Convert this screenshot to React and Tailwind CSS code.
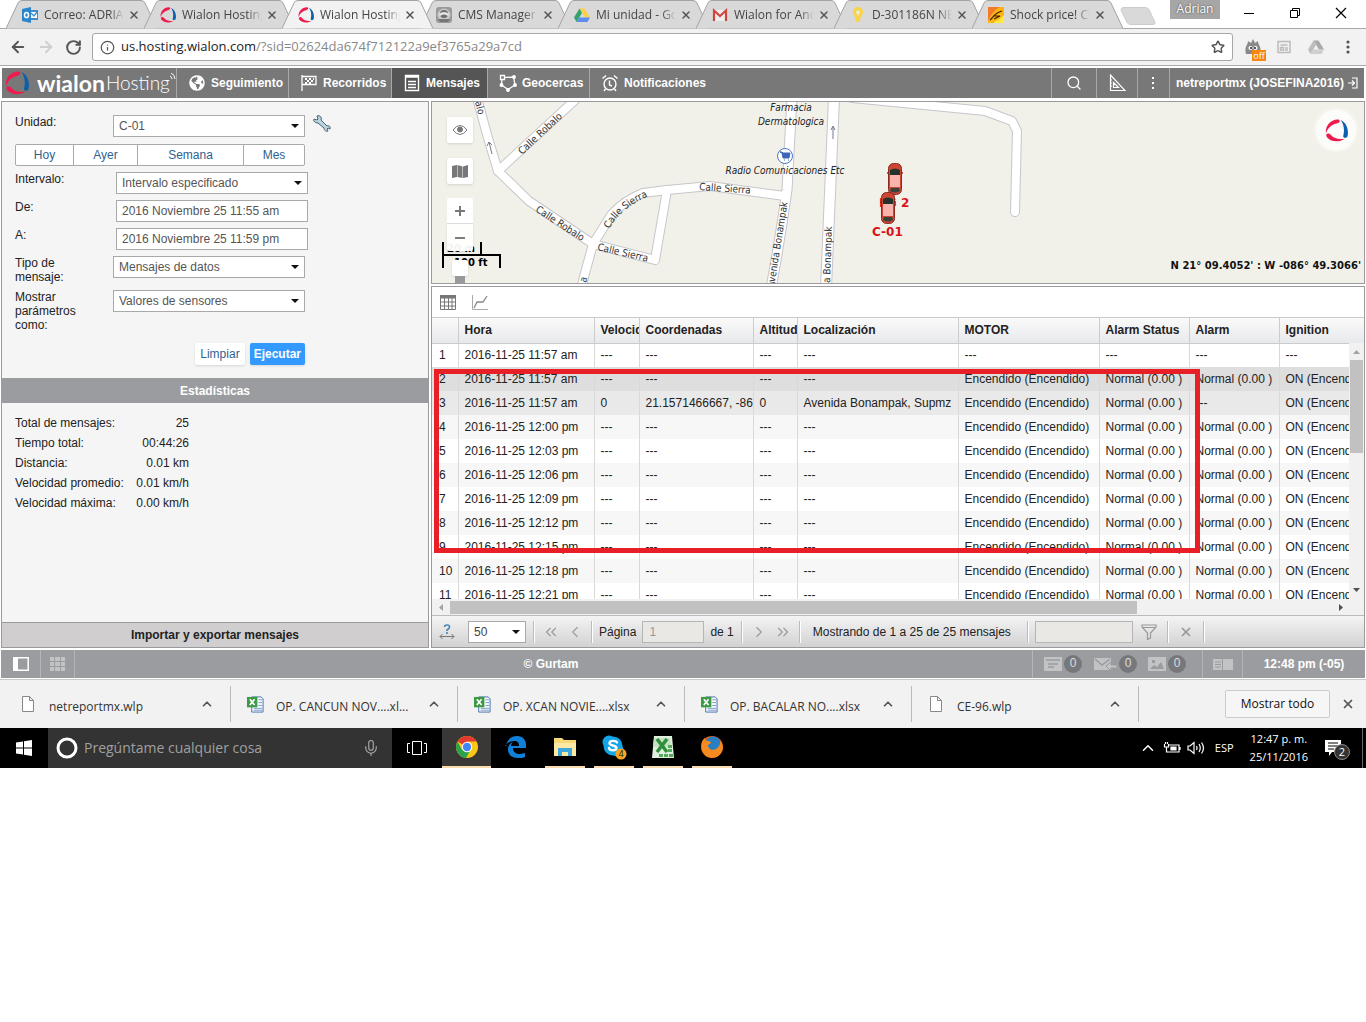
import {
  ArrowLeft,
  ArrowRight,
  ChevronLeft,
  ChevronRight,
  ChevronUp,
  ChevronsLeft,
  ChevronsRight,
  Info,
  Mic,
  RotateCw,
  Search,
  Star,
  X,
} from "lucide-react";
import { FaGlobeAmericas } from "react-icons/fa";

const UI = "font-['Liberation_Sans',Arial,sans-serif]";
const CHROME = "font-['Open_Sans','Noto_Sans',sans-serif]";

function WialonMark({ className }) {
  return (
    <svg viewBox="0 0 24 24" className={className} aria-hidden="true">
      <path d="M14 .5C6 0 0 7 1 15 3 9 7 6 13 4.500 16 3.500 16 1 14 .5z" fill="#ee1c4e" />
      <path d="M1.500 16c1-1.500 3.500-1 5 1 3 3.500 8 4.500 14 3.500-6 4-14 3.500-18-1-1-1-1.500-2.500-1-3.500z" fill="#ee1c4e" />
      <path d="M16.500 1c6 3 8.500 10 7 17-1 2.500-4.500 2-4.500 0 1.500-6 1-12-2.500-17z" fill="#0c5fa8" />
    </svg>
  );
}

function OutlookIcon() {
  return (
    <svg viewBox="0 0 16 16" className="size-4">
      <rect x="8" y="3" width="8" height="10" fill="#3b8fd0" />
      <path d="M9 5h6v6H9z" fill="#fff" />
      <path d="m9 6 3 3 3-4" fill="none" stroke="#3b8fd0" strokeWidth="1.3" />
      <path d="M0 2 9 0v16l-9-2z" fill="#2a86cc" />
      <ellipse cx="4.5" cy="8" rx="2" ry="2.6" fill="none" stroke="#fff" strokeWidth="1.5" />
    </svg>
  );
}

function CmsIcon() {
  return (
    <svg viewBox="0 0 16 16" className="size-4">
      <rect width="16" height="16" rx="3" fill="#9a9a9a" />
      <circle cx="8" cy="8" r="6.5" fill="#c9c9c9" />
      <circle cx="8" cy="7" r="4" fill="#6d6d6d" />
      <path d="M3 7q5-4 10 0l-1 2q-4-3-8 0z" fill="#e4e4e4" />
      <path d="M2 12h12l-2 3H4z" fill="#777" />
    </svg>
  );
}

function DriveIcon({ gray }) {
  return (
    <svg viewBox="0 0 16 16" className="size-4">
      <path d="M5.5 1.5h5L16 10.500h-5z" fill={gray ? "#a9a9a9" : "#fbd04b"} />
      <path d="M5.5 1.5 8 6 2.500 15 0 10.500z" fill={gray ? "#bdbdbd" : "#35a36c"} />
      <path d="M5.2 10.500H16L13.500 15h-11z" fill={gray ? "#cfcfcf" : "#5d8df0"} />
    </svg>
  );
}

function GmailIcon() {
  return (
    <svg viewBox="0 0 16 16" className="size-4">
      <path d="M1 3h14v11H1z" fill="#eee" />
      <path d="M2 14V3.500L8 9l6-5.500V14" fill="none" stroke="#d0473c" strokeWidth="2.2" />
    </svg>
  );
}

function BulbIcon() {
  return (
    <svg viewBox="0 0 16 16" className="size-4">
      <path d="M8 0a5 5 0 0 1 5 5c0 4-3 4-3 10H6c0-6-3-6-3-10a5 5 0 0 1 5-5z" fill="#f6d44b" />
      <path d="M6 5c0-2 4-2 4 0 0 2-2 2-2 6 0-4-2-4-2-6z" fill="#efe9cf" />
    </svg>
  );
}

function ShockIcon() {
  return (
    <svg viewBox="0 0 16 16" className="size-4">
      <rect width="16" height="16" fill="#fdb515" />
      <path d="M0 0h12C6 3 3 8 0 14z" fill="#f37a2b" />
      <path d="M7 14c3 0 6-3 9-6v8H6z" fill="#ffe93d" />
      <path d="M2 13c3-2 4-7 12-9M5 9h7l-6 3" fill="none" stroke="#3d2200" strokeWidth="1.2" />
    </svg>
  );
}

const tabs = [
  { title: "Correo: ADRIAN", icon: <OutlookIcon /> },
  { title: "Wialon Hosting", icon: <WialonMark className="size-4" /> },
  { title: "Wialon Hosting", icon: <WialonMark className="size-4" />, active: true },
  { title: "CMS Manager", icon: <CmsIcon /> },
  { title: "Mi unidad - Goo", icon: <DriveIcon /> },
  { title: "Wialon for Andro", icon: <GmailIcon /> },
  { title: "D-301186N NEX", icon: <BulbIcon /> },
  { title: "Shock price! Ch", icon: <ShockIcon /> },
];

function TabStrip() {
  return (
    <div className="flex h-7 bg-white pl-[6px]">
      {tabs.map((tab, i) => (
        <div
          key={i}
          className={`relative mr-[-13px] flex h-[29px] w-[151px] shrink-0 items-center pl-4 ${tab.active ? "z-10" : ""}`}
        >
          <svg viewBox="0 0 151 29" className="absolute inset-0 size-full" aria-hidden="true">
            <path
              d="M0 28.500 12 3q1-2.500 4-2.500h119q3 0 4 2.500l12 25.500"
              fill={tab.active ? "#f2f2f2" : "#d9d9d9"}
              stroke="#a3a3a3"
            />
          </svg>
          <span className="relative">{tab.icon}</span>
          <span className="relative ml-[6px] w-20 overflow-hidden text-xs whitespace-nowrap text-[#444] [mask-image:linear-gradient(to_right,#000_82%,transparent)]">
            {tab.title}
          </span>
          <button type="button" aria-label="Cerrar pestaña" className="relative ml-1 text-[#555]">
            <X size={12} strokeWidth={3} />
          </button>
        </div>
      ))}
      <svg viewBox="0 0 36 18" className="mt-[7px] ml-[10px] h-[18px] w-9 shrink-0">
        <path d="M3 .5h22q3 0 4 2l6 13q0 2-2 2H11q-3 0-4-2L1 3q0-2 2-2.500z" fill="#d9d9d9" stroke="#ccc" />
      </svg>
      <span className="ml-[14px] h-[19px] w-[50px] shrink-0 bg-[#a6a6a6] text-center text-xs leading-[18px] text-white [text-shadow:0_0_2px_#333]">
        Adrian
      </span>
      <div className="ml-auto flex items-start pt-[6px] pr-[18px]">
        <button type="button" aria-label="Minimizar" className="mr-8">
          <svg viewBox="0 0 14 14" className="size-[14px]"><path d="M2 7.500h10" stroke="#000" /></svg>
        </button>
        <button type="button" aria-label="Restaurar" className="mr-8">
          <svg viewBox="0 0 14 14" className="size-[14px]" fill="none" stroke="#000">
            <path d="M2.500 4.500h7v7h-7zM4.500 4V2.500h7v7H10" />
          </svg>
        </button>
        <button type="button" aria-label="Cerrar">
          <svg viewBox="0 0 14 14" className="size-[14px]"><path d="m2 2 10 10M12 2 2 12" stroke="#000" strokeWidth="1.200" /></svg>
        </button>
      </div>
    </div>
  );
}

function AddressBar() {
  return (
    <div className="flex h-[38px] items-center border-y border-[#a9a9a9] bg-[#f2f2f2] pl-[9px] text-[#555]">
      <button type="button" aria-label="Atrás"><ArrowLeft size={18} strokeWidth={2.5} /></button>
      <button type="button" aria-label="Adelante" className="ml-[10px] text-[#cfcfcf]"><ArrowRight size={18} strokeWidth={2.5} /></button>
      <button type="button" aria-label="Recargar" className="ml-[10px]"><RotateCw size={17} strokeWidth={2.8} /></button>
      <div className="ml-[10px] flex h-7 flex-1 items-center rounded-[3px] border border-[#a6a6a6] bg-white px-[7px]">
        <Info size={15} />
        <div className="ml-[6px] flex-1 text-[13px] text-[#888]">
          <span className="text-[#222]">us.hosting.wialon.com</span>/?sid=02624da674f712122a9ef3765a29a7cd
        </div>
        <Star size={14} strokeWidth={2.5} />
      </div>
      <div className="ml-3 flex items-center">
        <span className="relative size-4">
          <svg viewBox="0 0 16 16" className="size-4">
            <path d="M1 15C-1 8 3 6 3 2l3 2 2-4 2 4 3-2c0 4 4 6 2 13z" fill="#8a8a8a" />
            <circle cx="5.5" cy="9" r="2" fill="#fff" /><circle cx="10.5" cy="9" r="2" fill="#fff" />
            <circle cx="6" cy="9" r="1" fill="#222" /><circle cx="10" cy="9" r="1" fill="#222" />
          </svg>
          <span className="absolute top-[11px] left-[7px] h-[11px] w-[14px] bg-[#f7870f] text-center text-[9px] leading-[11px] text-white">off</span>
        </span>
        <svg viewBox="0 0 14 14" className="ml-4 size-[14px]" fill="none" stroke="#bcbcbc" strokeWidth="1.5">
          <path d="M1 1.500h12v11H1zM3.500 5h7M3.500 7.500h3v2.500h-3zM8 8h3M8 10h3" />
        </svg>
        <span className="ml-[17px]"><DriveIcon gray /></span>
        <svg viewBox="0 0 4 14" className="mr-4 ml-[22px] h-[14px] w-1" fill="#555">
          <circle cx="2" cy="2" r="1.6" /><circle cx="2" cy="7" r="1.6" /><circle cx="2" cy="12" r="1.6" />
        </svg>
      </div>
    </div>
  );
}

function FlagIcon() {
  return (
    <svg viewBox="0 0 18 18" className="size-[18px]" fill="none" stroke="#fff" strokeWidth="1.3">
      <path d="M2 1v16M2 2.500h14v8H2" />
      <path d="M5 5h2M9 5h2M13 5h1M7 7h2M11 7h2M5 9h2M9 9h2" strokeWidth="2" />
    </svg>
  );
}

function MessagesIcon() {
  return (
    <svg viewBox="0 0 16 18" className="h-[18px] w-4" fill="none" stroke="#fff" strokeWidth="1.4">
      <path d="M1.500 1.500h13v15h-13zM1 3h14M4 7.500h8M4 10.500h8M4 13.500h8" />
    </svg>
  );
}

function GeofenceIcon() {
  return (
    <svg viewBox="0 0 18 18" className="size-[18px]" fill="none" stroke="#fff" strokeWidth="1.3">
      <path d="M5 3.500 14.500 3 16 11l-7 4.500L2.500 11 3 5" />
      <path d="M1.500 1.500h4v4h-4z" />
      <g fill="#fff"><circle cx="15" cy="3" r="1.3" /><circle cx="16" cy="11" r="1.3" /><circle cx="9" cy="16" r="1.3" /><circle cx="2.5" cy="11" r="1.3" /></g>
    </svg>
  );
}

function AlarmIcon() {
  return (
    <svg viewBox="0 0 18 18" className="size-[18px]" fill="none" stroke="#fff" strokeWidth="1.4">
      <circle cx="9" cy="10" r="6" />
      <path d="M8.500 6.500V11l2.500 1M1.500 4.500 5 1.500M16.500 4.500 13 1.500M4.500 15 3 17M13.500 15l1.500 2" />
    </svg>
  );
}

const navItems = [
  { label: "Seguimiento", icon: <FaGlobeAmericas size={16} />, width: "w-[112px]" },
  { label: "Recorridos", icon: <FlagIcon />, width: "w-[103px]" },
  { label: "Mensajes", icon: <MessagesIcon />, width: "w-[96px]", active: true },
  { label: "Geocercas", icon: <GeofenceIcon />, width: "w-[102px]" },
  { label: "Notificaciones", icon: <AlarmIcon />, width: "w-[124px]" },
];

function AppHeader() {
  return (
    <header className="mx-[2px] mt-[2px] flex h-[30px] items-stretch bg-[#787878] text-xs font-bold text-white">
      <div className="flex w-[174px] items-center pl-[3px]">
        <WialonMark className="size-6 shrink-0" />
        <span className="ml-2 font-['Lato',sans-serif] text-[23px] leading-7 font-bold">wialon</span>
        <span className="ml-px font-['Lato',sans-serif] text-[19px] leading-7 font-light">Hosting</span>
        <svg viewBox="0 0 6 8" className="mb-3 h-2 w-[6px] shrink-0" fill="none" stroke="#fff">
          <path d="M0 3q2 1 2 3M1 0q4 2 4 6" />
        </svg>
      </div>
      <nav className="flex">
        {navItems.map((item) => (
          <a
            key={item.label}
            href="#"
            className={`flex shrink-0 items-center gap-[5px] border-l border-[#a8a8a8] pl-[10px] ${item.width} ${item.active ? "bg-[#555]" : ""}`}
          >
            <span className="flex w-[19px] justify-center">{item.icon}</span>
            {item.label}
          </a>
        ))}
      </nav>
      <div className="ml-auto flex">
        <button type="button" aria-label="Buscar" className="flex w-[45px] items-center justify-center border-l border-[#a8a8a8]">
          <Search size={16} />
        </button>
        <button type="button" aria-label="Herramientas" className="flex w-[41px] items-center justify-center border-l border-[#a8a8a8]">
          <svg viewBox="0 0 18 18" className="size-[18px]" fill="none" stroke="#fff" strokeWidth="1.2">
            <path d="M2.500 1v15.500H17zM5.500 8.500v5h5zM2 6h2M2 9h2M2 12h2" />
          </svg>
        </button>
        <button type="button" aria-label="Más" className="flex w-8 items-center justify-center border-l border-[#a8a8a8]">
          <svg viewBox="0 0 4 12" className="h-3 w-1" fill="#fff"><path d="M1 0h2v2H1zM1 5h2v2H1zM1 10h2v2H1z" /></svg>
        </button>
        <button type="button" className="flex items-center gap-1 border-l border-[#a8a8a8] px-[6px]">
          netreportmx (JOSEFINA2016)
          <svg viewBox="0 0 10 12" className="h-3 w-[10px]" fill="none" stroke="#fff" strokeWidth="1.2">
            <path d="M4 1h5v10H4M0 6h6M4 3.500 6.500 6 4 8.500" />
          </svg>
        </button>
      </div>
    </header>
  );
}

function Caret({ className }) {
  return (
    <svg viewBox="0 0 8 4" className={`pointer-events-none absolute h-1 w-2 ${className}`} aria-hidden="true">
      <path d="M0 0h8L4 4z" fill="#111" />
    </svg>
  );
}

const control = "h-[22px] w-[192px] appearance-none border border-[#a9a9a9] bg-white px-[5px] text-[#555]";

function SelectRow({ id, label, value, offset, children }) {
  return (
    <div className="flex items-start">
      <label htmlFor={id} className={`pr-4 ${offset ? "w-[101px]" : "w-[98px]"}`}>{label}</label>
      <div className="relative">
        <select id={id} className={`block ${control}`}>
          <option>{value}</option>
        </select>
        <Caret className="top-[9px] right-[6px]" />
      </div>
      {children}
    </div>
  );
}

function DateRow({ id, label, value }) {
  return (
    <div className="flex items-start">
      <label htmlFor={id} className="w-[101px]">{label}</label>
      <input id={id} type="text" defaultValue={value} className={control} />
    </div>
  );
}

const ranges = [
  ["Hoy", "w-[58px]"],
  ["Ayer", "w-[64px]"],
  ["Semana", "w-[106px]"],
  ["Mes", "flex-1"],
];

const stats = [
  ["Total de mensajes:", "25"],
  ["Tiempo total:", "00:44:26"],
  ["Distancia:", "0.01 km"],
  ["Velocidad promedio:", "0.01 km/h"],
  ["Velocidad máxima:", "0.00 km/h"],
];

function Sidebar() {
  return (
    <aside className="flex w-[428px] shrink-0 flex-col border border-[#9a9a9e] bg-[#f5f5f5] text-xs text-[#222]">
      <form className="flex flex-col gap-[6px] px-[13px] pt-[13px] leading-[14px]" onSubmit={(e) => e.preventDefault()}>
        <SelectRow id="unit" label="Unidad:" value="C-01">
          <button type="button" aria-label="Propiedades" className="ml-2">
            <svg viewBox="0 0 18 18" className="size-[18px]">
              <path
                d="M1 4l3 1 1-1-1-3c3-1 5 1 4 4l6 6c2-1 4 1 3 3l-2-1-1 1 1 2c-2 1-4-1-4-3L5 8C2 8 0 6 1 4z"
                fill="#b9d5e2"
                stroke="#4d5f6b"
              />
            </svg>
          </button>
        </SelectRow>
        <div className="mt-px flex h-[22px] w-[290px] divide-x divide-[#a9a9a9] rounded-xs border border-[#a9a9a9] bg-white text-[#2f5f8f]">
          {ranges.map(([label, width]) => (
            <button key={label} type="button" className={width}>{label}</button>
          ))}
        </div>
        <SelectRow id="interval" label="Intervalo:" value="Intervalo especificado" offset />
        <DateRow id="from" label="De:" value="2016 Noviembre 25 11:55 am" />
        <DateRow id="to" label="A:" value="2016 Noviembre 25 11:59 pm" />
        <SelectRow id="type" label="Tipo de mensaje:" value="Mensajes de datos" />
        <SelectRow id="params" label="Mostrar parámetros como:" value="Valores de sensores" />
        <div className="flex w-[290px] justify-end gap-[5px] pt-[5px]">
          <button type="button" className="h-[22px] rounded-xs bg-white px-[5px] text-[#2f5f8f] shadow-sm">Limpiar</button>
          <button type="submit" className="h-[22px] rounded-xs bg-[#3399ff] px-1 font-bold text-white shadow-sm">Ejecutar</button>
        </div>
      </form>
      <h2 className="mt-[13px] h-[25px] bg-[#9b9ca0] text-center leading-[26px] font-bold text-white">Estadísticas</h2>
      <dl className="mt-[10px] ml-[13px] w-[174px] leading-5">
        {stats.map(([label, value]) => (
          <div key={label} className="flex justify-between whitespace-nowrap">
            <dt>{label}</dt>
            <dd>{value}</dd>
          </div>
        ))}
      </dl>
      <button type="button" className="mt-auto h-[25px] border-t border-[#9a9a9e] bg-[#d0cece] font-bold">
        Importar y exportar mensajes
      </button>
    </aside>
  );
}

const roads = [
  { d: "M477 98 488 138 498 171 529 201 593 244", w: 8 },
  { d: "M498 171 575 100", w: 8 },
  { d: "M581 288 593 244 612 214Q625 200 643 193L667 190 710 186 785 196", w: 8 },
  { d: "M667 190 655 260 593 244", w: 8 },
  { d: "M792 98 787 190Q780 240 771 288", w: 9 },
  { d: "M834 98 826 288", w: 10 },
  { d: "M852 98 985 111 1012 121 1017 131 1015 212", w: 8 },
];

function Car({ x, y }) {
  return (
    <g transform={`translate(${x} ${y})`}>
      <rect x="0" y="9" width="16" height="2" rx="1" fill="#8c2a20" />
      <rect x="1.500" y=".5" width="13" height="31" rx="5" fill="#cf4434" stroke="#8a2a20" />
      <path d="M3 7q5-3 10 0v5H3z" fill="#26332c" />
      <path d="M3 12h10v12H3z" fill="#fbb4ac" />
      <path d="M4 25h8l1 3q-5 3-10 0z" fill="#36443b" />
    </g>
  );
}

function MapDrawing() {
  return (
    <svg
      viewBox="432 102 932 181"
      className="absolute top-0 left-0 h-[181px] w-[932px] font-['DejaVu_Sans_Condensed','DejaVu_Sans',sans-serif]"
      fill="none"
    >
      <g stroke="#c6c6cc" strokeLinecap="round" strokeLinejoin="round">
        {roads.map((r) => <path key={r.d} d={r.d} strokeWidth={r.w + 2} />)}
      </g>
      <g stroke="#fff" strokeLinecap="round" strokeLinejoin="round">
        {roads.map((r) => <path key={r.d} d={r.d} strokeWidth={r.w} />)}
      </g>
      <g stroke="#77778c" strokeWidth="1">
        <path d="M492 154 489 142M487 146l2-4 3 3M833 139V127M831 130l2-4 2 4" />
      </g>
      <defs>
        <path id="sierraCurve" d="M609 229Q622 206 652 195" />
      </defs>
      <g fill="#333" fontSize="10">
        <text transform="translate(522 155) rotate(-43)">Calle Robalo</text>
        <text transform="translate(535 211) rotate(33)">Calle Robalo</text>
        <text><textPath href="#sierraCurve">Calle Sierra</textPath></text>
        <text transform="translate(699 190) rotate(4)">Calle Sierra</text>
        <text transform="translate(597 250) rotate(13)">Calle Sierra</text>
        <text transform="translate(475 102) rotate(76)">alo</text>
        <text transform="translate(586 283) rotate(-76)">a</text>
        <text transform="translate(774 288) rotate(-81)">Avenida Bonampak</text>
        <text transform="translate(830 283) rotate(-88)">a Bonampak</text>
      </g>
      <g fill="#222" fontSize="10" fontStyle="italic" textAnchor="middle">
        <text x="791" y="111">Farmacia</text>
        <text x="791" y="125">Dermatologica</text>
        <text x="785" y="174">Radio Comunicaciones Etc</text>
      </g>
      <circle cx="785" cy="156" r="7.5" fill="#fff" stroke="#4a76c8" />
      <path d="M780 152h2l1 1h7l-1 5h-6l-1-5zM784 160h1M788 160h1" fill="#3b67b8" stroke="#3b67b8" />
      <Car x={887} y={163} />
      <g fill="#d9121a" fontSize="12" fontWeight="bold" className="font-['DejaVu_Sans',Verdana,sans-serif]">
        <text x="879" y="207">BS 2</text>
        <text x="872" y="236">C-01</text>
      </g>
      <Car x={880} y={192} />
    </svg>
  );
}

const mapButton = "flex w-[26px] items-center justify-center bg-white text-[#777]";

function MapPanel() {
  return (
    <section className="relative h-[183px] overflow-hidden border border-[#9a9a9e] bg-[#f2f1e9]">
      <MapDrawing />
      <div className="absolute top-[147px] left-[10px] font-['DejaVu_Sans',sans-serif] text-[10px] leading-3 font-bold">
        <svg viewBox="0 0 60 28" className="absolute top-[-7px] left-0 h-7 w-[60px]" fill="none" stroke="#000" strokeWidth="2">
          <path d="M1 0v26M0 13h58v13M39 0v13" />
        </svg>
        <span className="absolute -top-[6px] left-[5px] whitespace-nowrap">20 m</span>
        <span className="absolute top-[8px] left-[12px] whitespace-nowrap">100 ft</span>
      </div>
      <div className="absolute top-[15px] left-[15px] flex flex-col">
        <button type="button" aria-label="Visibilidad" className={`${mapButton} h-[26px] rounded-xs shadow-sm`}>
          <svg viewBox="0 0 16 12" className="h-3 w-4" fill="none" stroke="#777">
            <path d="M1 6q7-9 14 0-7 9-14 0z" /><circle cx="8" cy="5.5" r="2.5" fill="#777" />
          </svg>
        </button>
        <button type="button" aria-label="Capas" className={`${mapButton} mt-[15px] h-[26px] rounded-xs shadow-sm`}>
          <svg viewBox="0 0 16 13" className="h-[13px] w-4" fill="#777">
            <path d="M0 1l5-1v12l-5 1zM5.500 0l5 1.500V13l-5-1zM11 1.500 16 0v12l-5 1z" />
          </svg>
        </button>
        <button type="button" aria-label="Acercar" className={`${mapButton} mt-[14px] h-[26px] rounded-t-xs border-b border-[#ddd]`}>
          <svg viewBox="0 0 10 10" className="size-[10px]"><path d="M5 0v10M0 5h10" stroke="#777" strokeWidth="2" /></svg>
        </button>
        <button type="button" aria-label="Alejar" className={`${mapButton} h-[27px] rounded-b-xs opacity-95 shadow-sm`}>
          <svg viewBox="0 0 10 10" className="size-[10px]"><path d="M0 5h10" stroke="#777" strokeWidth="2" /></svg>
        </button>
        <span className="mx-auto mt-[9px] h-4 w-4 rounded-xs bg-white shadow-sm" />
        <span className="mx-auto h-3 w-[10px] bg-[#999]" />
      </div>
      <span className="absolute top-[8px] right-[8px] flex size-10 items-center justify-center rounded-full bg-white/80 shadow-[0_0_4px_#fff]">
        <WialonMark className="size-[23px]" />
      </span>
      <span className="absolute right-[3px] bottom-[9px] font-['DejaVu_Sans',Verdana,sans-serif] text-[10px] leading-4 font-bold text-[#111]">
        N 21° 09.4052' : W -086° 49.3066'
      </span>
    </section>
  );
}

const columns = [
  ["", "w-[26px]"],
  ["Hora", "w-[136px]"],
  ["Velocidad", "w-[45px]"],
  ["Coordenadas", "w-[114px]"],
  ["Altitud", "w-[44px]"],
  ["Localización", "w-[161px]"],
  ["MOTOR", "w-[141px]"],
  ["Alarm Status", "w-[90px]"],
  ["Alarm", "w-[90px]"],
  ["Ignition", ""],
];

const on = ["Encendido (Encendido)", "Normal (0.00 )", "Normal (0.00 )", "ON (Encendido)"];
const blank = ["---", "---", "---", "---"];

const messages = [
  ["2016-11-25 11:57 am", ...blank, ...blank],
  ["2016-11-25 11:57 am", ...blank, ...on],
  [
    "2016-11-25 11:57 am", "0", "21.1571466667, -86.8", "0", "Avenida Bonampak, Supmz",
    "Encendido (Encendido)", "Normal (0.00 )", "---", "ON (Encendido)",
  ],
  ["2016-11-25 12:00 pm", ...blank, ...on],
  ["2016-11-25 12:03 pm", ...blank, ...on],
  ["2016-11-25 12:06 pm", ...blank, ...on],
  ["2016-11-25 12:09 pm", ...blank, ...on],
  ["2016-11-25 12:12 pm", ...blank, ...on],
  ["2016-11-25 12:15 pm", ...blank, ...on],
  ["2016-11-25 12:18 pm", ...blank, ...on],
  ["2016-11-25 12:21 pm", ...blank, ...on],
];

function rowColor(i) {
  if (i === 1) return "bg-[#dedede]";
  if (i === 2) return "bg-[#e9e9e9]";
  return i % 2 ? "bg-[#f7f7f7]" : "bg-white";
}

function MessagesTable() {
  return (
    <div className="relative h-[281px] overflow-hidden">
      <table className="w-full table-fixed border-collapse text-xs whitespace-nowrap text-[#222]">
        <thead>
          <tr className="h-[25px] bg-linear-to-b from-[#fafafa] to-[#e8e9eb]">
            {columns.map(([label, width]) => (
              <th
                key={label}
                className={`overflow-hidden border-r border-b border-[#ccc] p-0 pl-[6px] text-left last:border-r-0 ${width}`}
              >
                {label}
              </th>
            ))}
          </tr>
        </thead>
        <tbody>
          {messages.map((cells, i) => (
            <tr key={i} className={`h-6 ${rowColor(i)}`}>
              <td className="overflow-hidden border-r border-[#d9d9d9] p-0 pl-[7px]">{i + 1}</td>
              {cells.map((cell, j) => (
                <td key={j} className="overflow-hidden border-r border-[#d9d9d9] p-0 pl-[6px] last:border-r-0">{cell}</td>
              ))}
            </tr>
          ))}
        </tbody>
      </table>
      <div className="absolute top-[25px] right-0 bottom-0 flex w-[15px] flex-col items-center bg-[#f1f1f1]">
        <svg viewBox="0 0 7 4" className="mt-[7px] h-1 w-[7px]"><path d="M0 4h7L3.500 0z" fill="#a3a3a3" /></svg>
        <span className="mt-[6px] h-[93px] w-[13px] bg-[#c1c1c1]" />
        <svg viewBox="0 0 7 4" className="mt-auto mb-[7px] h-1 w-[7px]"><path d="M0 0h7L3.500 4z" fill="#505050" /></svg>
      </div>
    </div>
  );
}

function PagerRule() {
  return <span className="h-[22px] w-[2px] shrink-0 border-l border-[#bbb] bg-white" />;
}

function Pager() {
  return (
    <div className="flex h-8 items-center border-t border-[#bbb] bg-linear-to-b from-[#f4f4f4] to-[#d2d2d2] text-xs whitespace-nowrap text-[#222]">
      <svg viewBox="0 0 16 15" className="ml-[7px] h-[15px] w-4 shrink-0" fill="none">
        <path d="M5.500 3q0-2 2.500-2t2.500 2q0 1.500-2.500 3v1M8 8v2" stroke="#4a86b8" strokeWidth="1.6" />
        <path d="M1 12.500h14M3.500 10 1 12.500 3.500 15M12.500 10l2.500 2.500-2.500 2.500" stroke="#777" />
      </svg>
      <div className="relative mr-[7px] ml-[13px]">
        <select aria-label="Filas por página" className="block h-[22px] w-[58px] appearance-none border border-[#a9a9a9] bg-white px-[5px] text-[#444]">
          <option>50</option>
        </select>
        <Caret className="top-[9px] right-[6px]" />
      </div>
      <PagerRule />
      <button type="button" aria-label="Primera página" className="ml-[7px] text-[#999]"><ChevronsLeft size={18} strokeWidth={1.5} /></button>
      <button type="button" aria-label="Página anterior" className="mr-[7px] ml-[6px] text-[#999]"><ChevronLeft size={18} strokeWidth={1.5} /></button>
      <PagerRule />
      <label htmlFor="page" className="ml-[6px]">Página</label>
      <input id="page" type="text" defaultValue="1" disabled className="mr-[6px] ml-[6px] h-[22px] w-[62px] border border-[#b5b5b5] bg-[#e9e8e4] px-[6px] text-[#999]" />
      de 1
      <span className="w-[7px]" />
      <PagerRule />
      <button type="button" aria-label="Página siguiente" className="ml-[7px] text-[#999]"><ChevronRight size={18} strokeWidth={1.5} /></button>
      <button type="button" aria-label="Última página" className="mr-[7px] ml-[6px] text-[#999]"><ChevronsRight size={18} strokeWidth={1.5} /></button>
      <PagerRule />
      <span className="mr-4 ml-3">Mostrando de 1 a 25 de 25 mensajes</span>
      <PagerRule />
      <input type="text" aria-label="Filtro" disabled className="ml-[6px] h-[22px] w-[98px] border border-[#b5b5b5] bg-[#e9e8e4]" />
      <button type="button" aria-label="Filtrar" className="mr-[10px] ml-2">
        <svg viewBox="0 0 16 16" className="size-4" fill="none" stroke="#999" strokeWidth="1.2"><path d="M1 1h14v2L9.500 9v5l-3 1.500V9L1 3zM2 3.500h12" /></svg>
      </button>
      <PagerRule />
      <button type="button" aria-label="Borrar filtro" className="mx-[10px] text-[#999]"><X size={14} strokeWidth={3} /></button>
      <PagerRule />
    </div>
  );
}

function MessagesPanel() {
  return (
    <section className="relative mt-[2px] border border-[#9a9a9e] bg-white">
      <div className="flex h-[31px] items-center gap-4 border-b border-[#ccc] pt-px pl-2">
        <button type="button" aria-label="Tabla">
          <svg viewBox="0 0 16 15" className="h-[15px] w-4" fill="none" stroke="#777">
            <path d="M.5.5h15v14H.5zM0 3h16M0 7h16M0 11h16M4.500 3v12M8.500 3v12M12 3v12" /><path d="M0 1.500h16" strokeWidth="3" />
          </svg>
        </button>
        <button type="button" aria-label="Gráfico">
          <svg viewBox="0 0 16 15" className="h-[15px] w-4" fill="none">
            <path d="M.5 0v14.500H16" stroke="#aaa" /><path d="m2 13 3-6h6l4-6" stroke="#888" strokeWidth="1.3" />
          </svg>
        </button>
      </div>
      <MessagesTable />
      <div className="flex h-4 items-center bg-[#f1f1f1] pr-[21px] pl-[7px]">
        <svg viewBox="0 0 4 7" className="h-[7px] w-1"><path d="M4 0v7L0 3.500z" fill="#a3a3a3" /></svg>
        <span className="ml-[7px] h-[13px] w-[76%] bg-[#c1c1c1]" />
        <svg viewBox="0 0 4 7" className="ml-auto h-[7px] w-1"><path d="M0 0v7l4-3.500z" fill="#505050" /></svg>
      </div>
      <Pager />
      <div className="pointer-events-none absolute top-[82px] left-[2px] h-[184px] w-[766px] border-[5px] border-[#e81f27]" />
    </section>
  );
}

function Badge() {
  return <span className="size-[18px] rounded-full bg-[#77787b] text-center leading-[17px] font-normal text-[#ddd]">0</span>;
}

function StatusBar() {
  return (
    <footer className="mx-px mt-[2px] flex h-7 items-center bg-[#9b9ca0] text-xs font-bold text-white">
      <button type="button" aria-label="Panel" className="flex h-full w-[39px] items-center justify-center">
        <svg viewBox="0 0 16 14" className="h-[14px] w-4"><path d="M.8.8h14.400v12.400H.8z" fill="none" stroke="#fff" strokeWidth="1.5" /><path d="M0 0h5v14H0z" fill="#fff" /></svg>
      </button>
      <button type="button" aria-label="Cuadrícula" className="flex h-full w-[35px] items-center justify-center border-x border-[#b4b5b8]">
        <svg viewBox="0 0 15 14" className="h-[14px] w-[15px]" fill="#c2c3c5">
          <path d="M0 0h4v4H0zM5 0h5v4H5zM11 0h4v4h-4zM0 5h4v4H0zM5 5h5v4H5zM11 5h4v4h-4zM0 10h4v4H0zM5 10h5v4H5zM11 10h4v4h-4z" />
        </svg>
      </button>
      <span className="flex-1 pr-[5px] text-center">© Gurtam</span>
      <div className="flex h-full w-[170px] items-center gap-[2px] border-l border-[#b4b5b8] pl-[11px]">
        <svg viewBox="0 0 18 14" className="h-[14px] w-[18px]"><path d="M0 0h18v14H0z" fill="#c2c3c5" /><path d="M2 3h14M4 7h10M4 10h6" stroke="#9b9ca0" strokeWidth="1.5" /></svg>
        <Badge />
        <svg viewBox="0 0 23 14" className="ml-[10px] h-[14px] w-[23px]"><path d="M0 1h17v12H0z" fill="#c2c3c5" /><path d="m1 2 7 6 8-6" fill="none" stroke="#9b9ca0" strokeWidth="1.5" /><path d="m12 9 5-4v3h6v3h-6v3z" fill="#c2c3c5" stroke="#9b9ca0" /></svg>
        <Badge />
        <svg viewBox="0 0 18 14" className="ml-[9px] h-[14px] w-[18px]"><path d="M0 0h18v14H0z" fill="#c2c3c5" /><path d="m2 12 4-4 3 2 4-5 3 7zM4 3h3v3H4z" fill="#9b9ca0" /></svg>
        <Badge />
      </div>
      <span className="flex h-full w-[41px] items-center justify-center border-x border-[#b4b5b8]">
        <svg viewBox="0 0 20 11" className="h-[11px] w-5"><path d="M0 0h9v11H0zM10 0h10v11H10z" fill="#c2c3c5" /><path d="M2 3h6M2 5.500h6M2 8h6" stroke="#9b9ca0" /></svg>
      </span>
      <span className="w-[122px] text-center">12:48 pm (-05)</span>
    </footer>
  );
}

const downloads = [
  { name: "netreportmx.wlp" },
  { name: "OP. CANCUN NOV....xl...", excel: true },
  { name: "OP. XCAN NOVIE....xlsx", excel: true },
  { name: "OP. BACALAR NO....xlsx", excel: true },
  { name: "CE-96.wlp" },
];

function DownloadBar() {
  return (
    <div className="mt-px flex h-[49px] items-center border-t border-[#c8c8c8] bg-[#f2f2f2] text-xs text-[#333]">
      {downloads.map((file, i) => (
        <div key={file.name} className={`flex h-9 shrink-0 items-center border-r border-[#bbb] ${i === 0 ? "w-[231px] pl-[20px]" : "w-[227px] pl-4"}`}>
          {file.excel ? (
            <svg viewBox="0 0 18 18" className="size-[17px]">
              <path d="M5 1h10l2 2v14H5z" fill="#fff" stroke="#3f6aa8" />
              <path d="M12 4h4M12 7h4M12 10h4M7 13h9M7 15h9" stroke="#6f94c8" />
              <rect x="0" y="1" width="11" height="11" fill="#3c9a44" />
              <path d="m3 3.500 5 6M8 3.500l-5 6" stroke="#fff" strokeWidth="1.8" />
            </svg>
          ) : (
            <svg viewBox="0 0 16 18" className="h-[18px] w-4"><path d="M2.500 1.500h7l4 4v11h-11zM9.500 1.500v4h4" fill="#fff" stroke="#888" /></svg>
          )}
          <span className={`mt-[5px] flex-1 ${file.excel ? "ml-3" : "ml-[13px]"}`}>{file.name}</span>
          <button type="button" aria-label="Opciones" className="mr-4 text-[#555]"><ChevronUp size={14} strokeWidth={3} /></button>
        </div>
      ))}
      <button type="button" className="mr-[11px] ml-auto h-7 w-[105px] shrink-0 rounded-xs border border-[#ccc] bg-[#f6f6f6] text-[#111]">Mostrar todo</button>
      <button type="button" aria-label="Cerrar" className="mr-[11px] text-[#555]"><X size={14} strokeWidth={3} /></button>
    </div>
  );
}

function ChromeLogo() {
  return (
    <svg viewBox="0 0 24 24" className="size-6">
      <circle cx="12" cy="12" r="11" fill="#fbc717" />
      <path d="M12 12 2.500 6.500A11 11 0 0 1 21.500 6.500H12z" fill="#e23a2e" />
      <path d="M12 12 7 15 2.500 6.500A11 11 0 0 0 11 23l4.500-8z" fill="#2ba24c" />
      <circle cx="12" cy="12" r="5.2" fill="#fff" />
      <circle cx="12" cy="12" r="4.2" fill="#4285f4" />
    </svg>
  );
}

function EdgeLogo() {
  return (
    <svg viewBox="0 0 24 24" className="size-6">
      <path
        d="M2 11C3 4 8 1 13 1c6 0 9 4 9 9v3H9c0 4 3 6 7 6 2 0 4-1 5-1v4c-2 1-4 1-7 1-7 0-10-4-10-9 0-3 2-6 5-7-1 1-2 2-2 4h8c0-3-1-5-5-5-4 0-7 2-9 5z"
        fill="#1080d8"
      />
    </svg>
  );
}

function FolderLogo() {
  return (
    <svg viewBox="0 0 24 24" className="size-6">
      <path d="M1 3h8l2 2h12v16H1z" fill="#f8d978" />
      <path d="M1 8h22v13H1z" fill="#fde9a3" />
      <path d="M5 21v-8h14v8h-4v-4H9v4z" fill="#3ea7dc" />
    </svg>
  );
}

function SkypeLogo() {
  return (
    <svg viewBox="0 0 26 26" className="size-[26px]">
      <circle cx="8" cy="8" r="6.5" fill="#12a5e8" /><circle cx="16" cy="16" r="6.5" fill="#12a5e8" />
      <circle cx="12" cy="12" r="9.5" fill="#12a5e8" />
      <path d="M16 8.500c-1-2-7-2.500-7.500.5s7 2 7 5-7 3-7.500 0" fill="none" stroke="#fff" strokeWidth="2.4" strokeLinecap="round" />
      <circle cx="20" cy="20" r="5.5" fill="#f6a623" />
      <text x="20" y="23" fontSize="9" textAnchor="middle" fill="#222">4</text>
    </svg>
  );
}

function ExcelLogo() {
  return (
    <svg viewBox="0 0 24 24" className="size-6">
      <path d="M3 1h18l2 22H1z" fill="#dff0dc" />
      <path d="M3 3h16l1 9H2z" fill="#c4e3c0" />
      <path d="m6 4 10 13M16 4 6 17" stroke="#2f8f3c" strokeWidth="3.5" />
      <path d="M17 10h4v3h-4zM17 14h4v3h-4zM8 19h4v3H8zM13 19h4v3h-4zM18 19h4v3h-4z" fill="#56a85c" />
    </svg>
  );
}

function FirefoxLogo() {
  return (
    <svg viewBox="0 0 24 24" className="size-6">
      <circle cx="12" cy="12" r="11" fill="#e8601c" />
      <circle cx="13" cy="9.5" r="8" fill="#2a7ec4" />
      <path d="M1.500 9C2 6 3 4 5 3c0 2 1 3 3 3 2 0 3 1 3 2l-3 2c0 4 4 6 8 4 3-2 5-5 4-9 3 4 4 9 1 13-4 6-12 6-16 2C2 17 1 13 1.500 9z" fill="#f58b1f" />
    </svg>
  );
}

const apps = [
  { name: "Chrome", logo: <ChromeLogo />, open: true, active: true },
  { name: "Edge", logo: <EdgeLogo /> },
  { name: "Explorador", logo: <FolderLogo />, open: true },
  { name: "Skype", logo: <SkypeLogo />, open: true },
  { name: "Excel", logo: <ExcelLogo />, open: true },
  { name: "Firefox", logo: <FirefoxLogo />, open: true },
];

function Taskbar() {
  return (
    <div className="flex h-10 items-center bg-black text-white">
      <button type="button" aria-label="Inicio" className="flex w-12 shrink-0 justify-center">
        <svg viewBox="0 0 16 16" className="size-4" fill="#fff"><path d="M0 2.500 7 1.500v6H0zM8 1.300 16 0v7.500H8zM0 8.500h7v6L0 13.500zM8 8.500h8V16l-8-1.300z" /></svg>
      </button>
      <div className="flex h-full w-[344px] shrink-0 items-center bg-[#333] px-2">
        <svg viewBox="0 0 22 22" className="size-[22px] shrink-0"><circle cx="11" cy="11" r="9" fill="none" stroke="#fff" strokeWidth="3" /></svg>
        <input type="text" aria-label="Buscar" placeholder="Pregúntame cualquier cosa" className="ml-[6px] w-0 flex-1 text-sm placeholder:text-[#a0a0a0]" />
        <Mic size={18} strokeWidth={1.5} className="mr-1 text-[#aaa]" />
      </div>
      <button type="button" aria-label="Vista de tareas" className="flex w-[50px] shrink-0 justify-center">
        <svg viewBox="0 0 20 14" className="h-[14px] w-5" fill="none" stroke="#fff"><path d="M5.500.5h9v13h-9zM3 2.500H.5v9H3M17 2.500h2.500v9H17" /></svg>
      </button>
      <div className="flex h-full">
        {apps.map((app) => (
          <button
            key={app.name}
            type="button"
            aria-label={app.name}
            className={`flex h-full w-[49px] flex-col items-center ${app.active ? "bg-[#3a3836]" : ""}`}
          >
            <span className="flex flex-1 items-center">{app.logo}</span>
            <span className={`h-[2px] ${app.active ? "w-full" : "w-10"} ${app.open ? "bg-[#fbdcae]" : ""}`} />
          </button>
        ))}
      </div>
      <div className="ml-auto flex shrink-0 items-center text-[11px]">
        <ChevronUp size={18} strokeWidth={2} />
        <svg viewBox="0 0 18 14" className="ml-[6px] h-[14px] w-[18px]" fill="none" stroke="#fff" strokeWidth="1.2">
          <path d="M6 4h10v7H6M17 6v3M1.500 3v3h4V3M2.500 1v2M4.500 1v2M3.500 6v5H6" /><path d="M8 6h5v3H8z" fill="#fff" />
        </svg>
        <svg viewBox="0 0 18 14" className="ml-[6px] h-[14px] w-[18px]" fill="none" stroke="#fff" strokeWidth="1.2">
          <path d="M1 5h2l4-3.500v11L3 9H1zM9.500 5q1 2 0 4M12 3q2.500 4 0 8M14.500 1.500q4 5.500 0 11" />
        </svg>
        <span className="ml-[10px]">ESP</span>
        <div className="ml-4 text-center leading-[18px]">
          <div>12:47 p. m.</div>
          <div>25/11/2016</div>
        </div>
        <button type="button" aria-label="Notificaciones" className="relative ml-4 h-6 w-[26px]">
          <svg viewBox="0 0 18 18" className="size-[18px]"><path d="M1 1h16v12H8l-3 4v-4H1z" fill="#fff" /><path d="M4 4h10M4 7h10M4 10h6" stroke="#000" /></svg>
          <span className="absolute right-0 bottom-0 size-4 rounded-full border border-[#888] bg-[#333] leading-[14px]">2</span>
        </button>
        <span className="ml-3 h-10 w-1 border-l border-[#666]" />
      </div>
    </div>
  );
}

export default function App() {
  return (
    <div className="w-full overflow-x-hidden bg-white">
      <div className={CHROME}>
        <TabStrip />
        <AddressBar />
      </div>
      <div className={UI}>
        <AppHeader />
        <main className="mt-[3px] flex gap-[2px] px-px">
          <Sidebar />
          <div className="min-w-0 flex-1">
            <MapPanel />
            <MessagesPanel />
          </div>
        </main>
        <StatusBar />
      </div>
      <div className={CHROME}>
        <DownloadBar />
        <Taskbar />
      </div>
    </div>
  );
}
